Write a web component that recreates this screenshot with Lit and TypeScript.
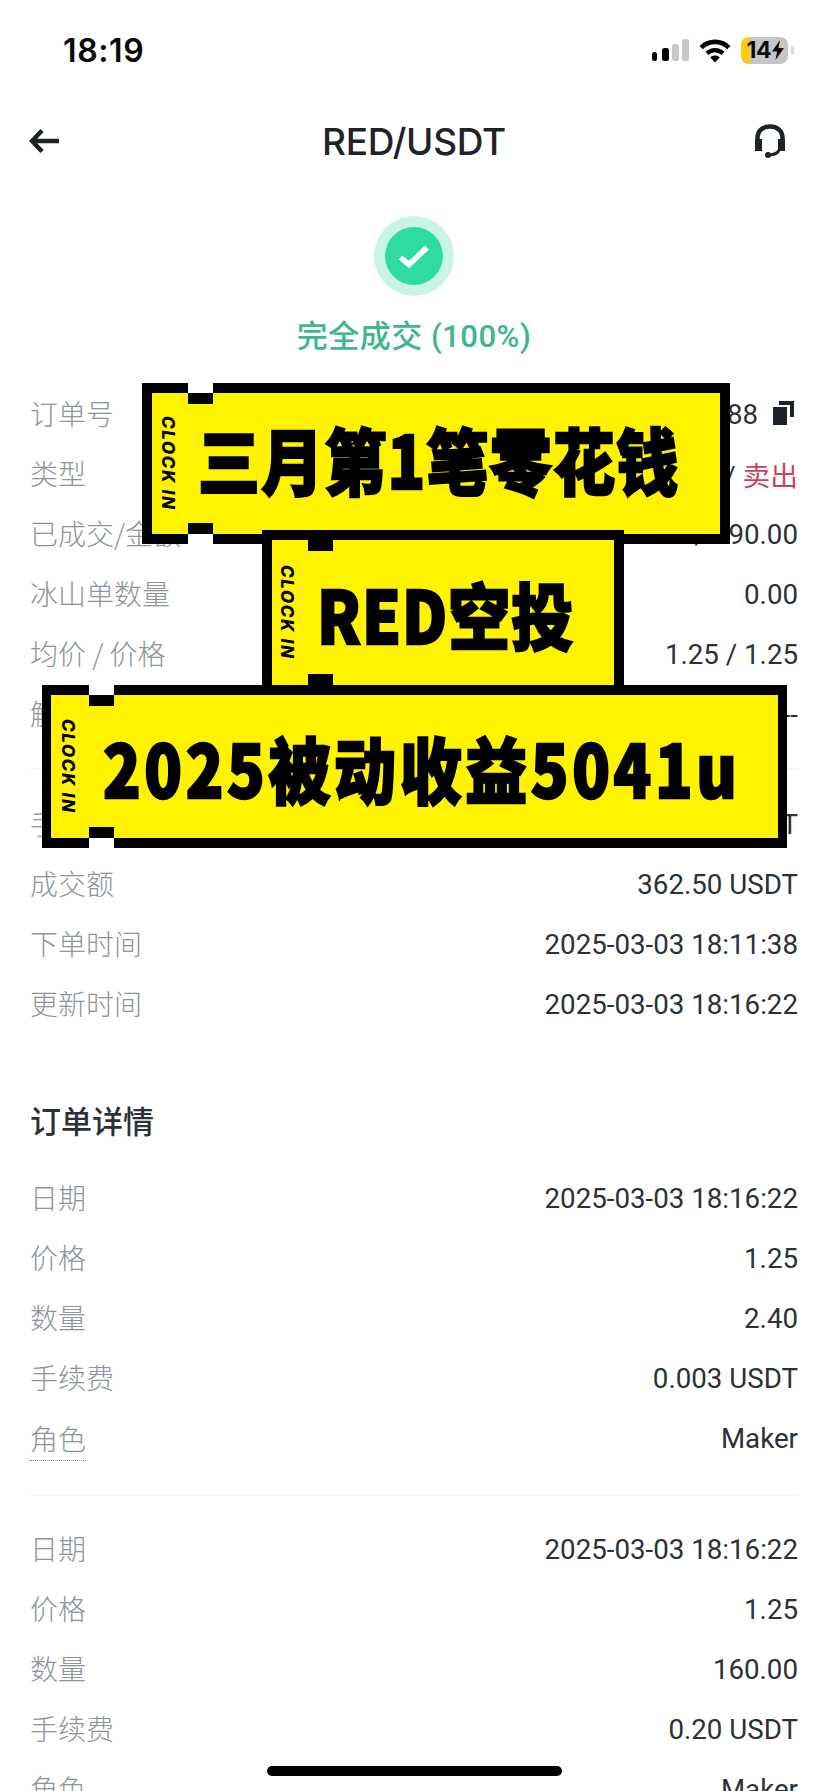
import { LitElement, html, css, svg } from "lit";
import { customElement } from "lit/decorators.js";

const UI = css`"Roboto", "Noto Sans CJK SC", sans-serif`;

type Row = { label: string; value: unknown; cls?: string };

const top: Row[] = [
  { label: "订单号", value: "", cls: "order" },
  { label: "类型", value: "", cls: "type" },
  { label: "已成交/金额", value: "290.00 / 290.00" },
  { label: "冰山单数量", value: "0.00" },
  { label: "均价 / 价格", value: "1.25 / 1.25" },
  { label: "触发条件", value: "--" },
];
const mid: Row[] = [
  { label: "手续费", value: "0.203 USDT" },
  { label: "成交额", value: "362.50 USDT" },
  { label: "下单时间", value: "2025-03-03 18:11:38" },
  { label: "更新时间", value: "2025-03-03 18:16:22" },
];
const fill1: Row[] = [
  { label: "日期", value: "2025-03-03 18:16:22" },
  { label: "价格", value: "1.25" },
  { label: "数量", value: "2.40" },
  { label: "手续费", value: "0.003 USDT" },
  { label: "角色", value: "Maker", cls: "role" },
];
const fill2: Row[] = [
  { label: "日期", value: "2025-03-03 18:16:22" },
  { label: "价格", value: "1.25" },
  { label: "数量", value: "160.00" },
  { label: "手续费", value: "0.20 USDT" },
  { label: "角色", value: "Maker" },
];

const wifi = svg`<svg class="wifi" viewBox="0 0 32 25" width="32" height="25">
  <path d="M2.2 9.6C10 2 22 2 29.8 9.6" fill="none" stroke="#000" stroke-width="4.6"/>
  <path d="M8 15.4C12.6 11 19.4 11 24 15.4" fill="none" stroke="#000" stroke-width="4.4"/>
  <path d="M11.2 19.2C14 16.8 18 16.8 20.8 19.2L16 24.6Z" fill="#000"/>
</svg>`;

@customElement("app-root")
export class AppRoot extends LitElement {
  static styles = css`
    :host {
      display: block;
      position: relative;
      width: 828px;
      height: 1791px;
      overflow: hidden;
      background: #fff;
      font-family: ${UI};
      color: #2b3139;
    }
    .status {
      height: 100px;
      display: flex;
      justify-content: space-between;
      align-items: center;
      padding: 0 34px 0 63px;
    }
    .time {
      font: 600 32px "Inter", sans-serif;
      color: #0a0a0a;
      letter-spacing: 0.6px;
    }
    .sys { display: flex; align-items: center; }
    .signal { display: flex; align-items: flex-end; gap: 3px; height: 22px; margin-right: 10px; }
    .signal i { display: block; width: 7px; border-radius: 2.5px; background: #000; }
    .signal i:nth-child(1) { height: 9px; width: 5px; margin-right: 2px; }
    .signal i:nth-child(2) { height: 13px; }
    .signal i:nth-child(3) { height: 17px; background: #c9c9c9; }
    .signal i:nth-child(4) { height: 22px; background: #c9c9c9; }
    .wifi { margin-right: 10px; display: block; }
    .battery {
      position: relative;
      width: 47px;
      height: 27px;
      border-radius: 8px;
      overflow: hidden;
      background: #c6c6c6;
      display: flex;
      align-items: center;
      justify-content: flex-end;
      padding-right: 4px;
      box-sizing: border-box;
      gap: 1px;
    }
    .level { position: absolute; left: 0; top: 0; bottom: 0; width: 9px; background: #ffcb12; }
    .pct { position: relative; font: 700 23px "Inter", sans-serif; color: #0b0b0b; letter-spacing: -0.5px; }
    .bolt { position: relative; display: block; }
    .nub { width: 3px; height: 9px; margin-left: 3px; border-radius: 0 2px 2px 0; background: #d8d8d8; }

    .nav {
      height: 82px;
      display: grid;
      grid-template-columns: 1fr auto 1fr;
      align-items: center;
      padding: 0 42px;
    }
    .nav svg { display: block; }
    .nav .back { margin-left: -13px; }
    .nav .help { justify-self: end; }
    .title { font: 500 37px "Inter", sans-serif; color: #1e2329; letter-spacing: -0.3px; }

    .result { display: flex; flex-direction: column; align-items: center; padding-top: 34px; height: 203px; box-sizing: border-box; }
    .result svg { display: block; flex: none; }
    .state { margin-top: 23px; font-size: 31px; line-height: 36px; font-weight: 500; color: #3fb68b; letter-spacing: 0.5px; }

    .section { padding: 0 30px; }
    .row { height: 60px; display: flex; align-items: center; justify-content: space-between; font-size: 27.7px; }
    .label { color: #8e949d; font-family: "Noto Sans CJK SC", sans-serif; font-size: 28px; font-weight: 300; margin-bottom: 4px; }
    .value { color: #2b3139; white-space: nowrap; margin-bottom: 2px; }
    .role .label { border-bottom: 1px dotted #8e949d; padding-bottom: 6px; margin: 4px 0 0; line-height: 32px; }
    .order .value { display: flex; align-items: center; gap: 15px; }
    .order svg { display: block; margin: -3px 3px 0 0; }
    .sell { color: #cf3f63; }

    .rule { height: 1px; background: #eef0f2; margin: 0 30px; }
    .rule.one { margin-top: 23px; margin-bottom: 26px; }
    .rule.two { margin-top: 26px; margin-bottom: 24px; }
    h2 { margin: 63px 30px 27px; font-size: 31px; line-height: 44px; font-weight: 500; color: #2b3139; font-family: "Noto Sans CJK SC", sans-serif; }

    .banner {
      position: absolute;
      box-sizing: border-box;
      border: 10px solid #000;
      background: #fff300;
      display: flex;
      align-items: center;
    }
    .b1 { left: 142px; top: 383px; width: 588px; height: 161px; padding-left: 6px; }
    .b2 { left: 262px; top: 530px; width: 362px; height: 165px; padding-left: 5px; }
    .b3 { left: 42px; top: 685px; width: 745px; height: 163px; border-width: 10px 9px; padding-left: 7px; }
    .notch { position: absolute; width: 25px; height: 21px; background: #000; border: 0 solid #fff; box-sizing: border-box; }
    .notch.t { top: -10px; border-top-width: 10px; }
    .notch.b { bottom: -10px; border-bottom-width: 10px; }
    .b1 .notch { left: 36px; }
    .b2 .notch { left: 36px; }
    .b3 .notch { left: 38px; }
    .b2 .notch.t { border-top-color: #000; }
    .clock {
      font: italic 800 17px "Inter", sans-serif;
      writing-mode: vertical-rl;
      letter-spacing: 1.6px;
      color: #000;
      white-space: nowrap;
      flex: none;
    }
    .big {
      font: 900 62px "Noto Sans CJK SC", sans-serif;
      color: #000;
      white-space: nowrap;
      transform: scaleY(1.16);
      -webkit-text-stroke: 2px #000;
    }
    .b1 .big { margin-left: 20px; margin-bottom: 12px; letter-spacing: 1.2px; }
    .b2 .big { margin-left: 20px; letter-spacing: 1px; }
    .b3 .big { margin-left: 25px; letter-spacing: 3.6px; }

    .home { position: absolute; left: 267px; top: 1766px; width: 295px; height: 10px; border-radius: 5px; background: #000; }
  `;

  private row(r: Row) {
    let v: unknown = r.value;
    if (r.cls === "order") {
      v = html`<span>328765488</span>
        <svg width="22" height="24" viewBox="0 0 22 24">
          <path d="M6 0H21V16H17V4H6Z" fill="#1e2329" />
          <rect x="0" y="6" width="14" height="18" fill="#1e2329" />
        </svg>`;
    }
    if (r.cls === "type") v = html`限价 / <span class="sell">卖出</span>`;
    return html`<div class="row ${r.cls ?? ""}">
      <span class="label">${r.label}</span><span class="value">${v}</span>
    </div>`;
  }

  private banner(cls: string, text: string) {
    return html`<div class="banner ${cls}">
      <span class="notch t"></span><span class="notch b"></span>
      <span class="clock">CLOCK IN</span><span class="big">${text}</span>
    </div>`;
  }

  render() {
    return html`
      <div class="status">
        <span class="time">18:19</span>
        <div class="sys">
          <div class="signal"><i></i><i></i><i></i><i></i></div>
          ${wifi}
          <div class="battery">
            <span class="level"></span><span class="pct">14</span>
            <svg class="bolt" width="12" height="20" viewBox="0 0 12 20"><path d="M8 0L0 11.5H5L3.5 20L12 8H6.5Z" fill="#0b0b0b"/></svg>
          </div>
          <span class="nub"></span>
        </div>
      </div>
      <div class="nav">
        <svg class="back" width="32" height="26" viewBox="0 0 32 26"><path d="M13 2.5L3 13L13 23.5M3.5 13H30" fill="none" stroke="#1e2329" stroke-width="4.5"/></svg>
        <span class="title">RED/USDT</span>
        <svg class="help" width="32" height="34" viewBox="0 0 32 34">
          <path d="M3.500 17V14C3.500 6.500 9 2.500 16 2.500S28.500 6.500 28.500 14V17" fill="none" stroke="#1e2329" stroke-width="4.500"/>
          <rect x="1" y="15" width="7" height="12" fill="#1e2329"/>
          <rect x="24" y="15" width="7" height="12" fill="#1e2329"/>
          <path d="M25 26C24 29.500 21 30.500 15 31" fill="none" stroke="#1e2329" stroke-width="3"/>
          <circle cx="14" cy="31" r="3" fill="#1e2329"/>
        </svg>
      </div>
      <div class="result">
        <svg width="80" height="80" viewBox="0 0 80 80">
          <circle cx="40" cy="40" r="40" fill="#c9f5e4"/>
          <circle cx="40" cy="40" r="29" fill="#2fdc9f"/>
          <path d="M26.500 41.500L35 48.500L53 31.500" fill="none" stroke="#fff" stroke-width="5.500"/>
        </svg>
        <div class="state">完全成交 (100%)</div>
      </div>
      <div class="section">${top.map((r) => this.row(r))}</div>
      <div class="rule one"></div>
      <div class="section">${mid.map((r) => this.row(r))}</div>
      <h2>订单详情</h2>
      <div class="section">${fill1.map((r) => this.row(r))}</div>
      <div class="rule two"></div>
      <div class="section">${fill2.map((r) => this.row(r))}</div>

      ${this.banner("b1", "三月第1笔零花钱")}
      ${this.banner("b2", "RED空投")}
      ${this.banner("b3", "2025被动收益5041u")}
      <div class="home"></div>
    `;
  }
}
